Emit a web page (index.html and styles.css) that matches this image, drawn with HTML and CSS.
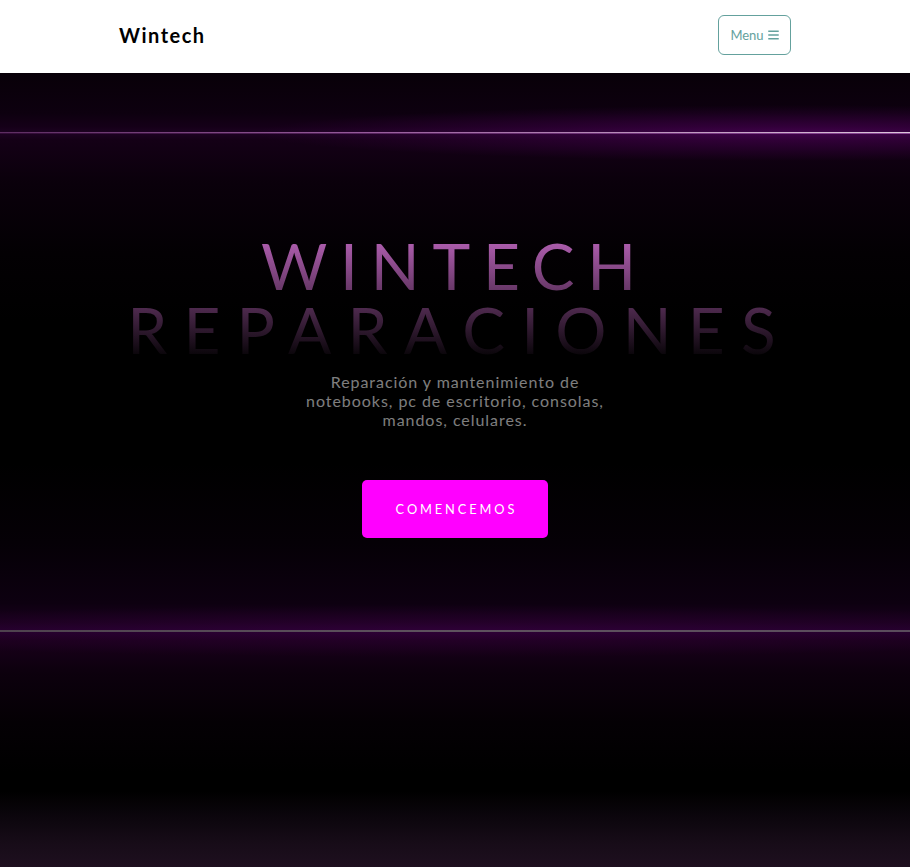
FILE: index.html
```html
<!DOCTYPE html>
<html lang="es">
<head>
<meta charset="utf-8">
<title>Wintech</title>
<link rel="stylesheet" href="styles.css">
</head>
<body>
<nav class="navbar">
  <div class="container nav-inner">
    <a class="brand" href="#">Wintech</a>
    <button class="toggler" type="button">Menu
      <svg class="bars" viewBox="0 0 448 512" width="11" height="12" aria-hidden="true"><path fill="currentColor" d="M16 132h416c8.8 0 16-7.2 16-16V76c0-8.8-7.2-16-16-16H16C7.2 60 0 67.2 0 76v40c0 8.8 7.2 16 16 16zm0 160h416c8.8 0 16-7.2 16-16v-40c0-8.8-7.2-16-16-16H16c-8.8 0-16 7.2-16 16v40c0 8.8 7.2 16 16 16zm0 160h416c8.8 0 16-7.2 16-16v-40c0-8.8-7.2-16-16-16H16c-8.8 0-16 7.2-16 16v40c0 8.8 7.2 16 16 16z"/></svg>
    </button>
  </div>
</nav>
<header class="masthead">
  <div class="hero">
    <h1 class="title"><span class="line1">Wintech</span><span class="line2">Reparaciones</span></h1>
    <h2 class="subtitle">Reparación y mantenimiento de<br>notebooks, pc de escritorio, consolas,<br>mandos, celulares.</h2>
    <a class="cta" href="#">Comencemos</a>
  </div>
</header>
</body>
</html>
```
FILE: styles.css
```css
* { box-sizing: border-box; }
html, body { margin: 0; padding: 0; }
body {
  font-family: "Lato", "Noto Sans", sans-serif;
  background: #000;
  overflow: hidden;
}
.container {
  width: 720px;
  margin: 0 auto;
  padding: 0 24px;
}
.navbar {
  height: 73px;
  background: #fff;
}
.nav-inner {
  height: 100%;
  display: flex;
  align-items: center;
  justify-content: space-between;
  padding-bottom: 4px;
}
.brand {
  font-family: "Lato", sans-serif;
  font-weight: 700;
  font-size: 20px;
  letter-spacing: 1.5px;
  color: #000;
  text-decoration: none;
}
.toggler {
  display: flex;
  align-items: center;
  gap: 4px;
  height: 40px;
  width: 73px;
  justify-content: center;
  padding: 0;
  background: #fff;
  border: 1px solid #64a19d;
  border-radius: 6px;
  color: #64a19d;
  font-family: "Lato", sans-serif;
  font-size: 13px;
}
.bars { display: block; }
.masthead {
  height: 794px;
  background:
    linear-gradient(to right, rgba(100,50,105,0.9), rgba(150,90,155,1) 40%, rgba(220,200,220,1)) 0 59px / 100% 1px no-repeat,
    linear-gradient(to right, rgba(70,20,75,0.5), rgba(160,90,170,0.8)) 0 60px / 100% 1px no-repeat,
    linear-gradient(to right, #4e424e, #5e525e 50%, #5a4c5c) 0 557px / 100% 2px no-repeat,
    radial-gradient(ellipse 60% 28px at 88% 60px, rgba(130,0,150,0.35), rgba(130,0,150,0) 100%),
    radial-gradient(ellipse 80% 26px at 50% 558px, rgba(70,0,80,0.35), rgba(70,0,80,0) 100%),
    linear-gradient(to bottom,
      #080008 0px, #0d000f 40px, #150018 54px, #1d0222 60px, #140016 67px,
      #0a000b 110px, #030003 180px, #000 250px, #000 390px,
      #050006 470px, #0d0010 530px, #1a001e 550px, #22002a 558px, #19001b 567px,
      #0c000d 600px, #040004 650px, #000 700px, #000 718px,
      #0c060d 745px, #170c18 770px, #1e0f1f 794px);
  text-align: center;
}
.hero {
  padding-top: 161px;
  display: flex;
  flex-direction: column;
  align-items: center;
}
.title {
  margin: 0;
  font-family: "Lato", sans-serif;
  font-weight: 400;
  font-size: 64px;
  line-height: 64px;
  text-transform: uppercase;
  text-align: center;
  background: linear-gradient(rgba(205,110,205,0.9), rgba(205,110,205,0));
  -webkit-background-clip: text;
  background-clip: text;
  color: transparent;
  width: 100%;
}
.line1 {
  display: block;
  letter-spacing: 12.8px;
}
.line2 {
  display: block;
  letter-spacing: 16.2px;
  padding-left: 9px;
}
.subtitle {
  margin: 10px 0 0;
  font-size: 16px;
  line-height: 19.2px;
  font-weight: 400;
  color: rgba(255,255,255,0.5);
  letter-spacing: 0.95px;
}
.cta {
  margin-top: 50px;
  width: 186px;
  height: 58px;
  display: flex;
  align-items: center;
  justify-content: center;
  background: #ff00ff;
  border-radius: 5px;
  color: #fff;
  text-decoration: none;
  text-transform: uppercase;
  font-size: 12.8px;
  letter-spacing: 2.9px;
  padding-left: 2.9px;
}
```
